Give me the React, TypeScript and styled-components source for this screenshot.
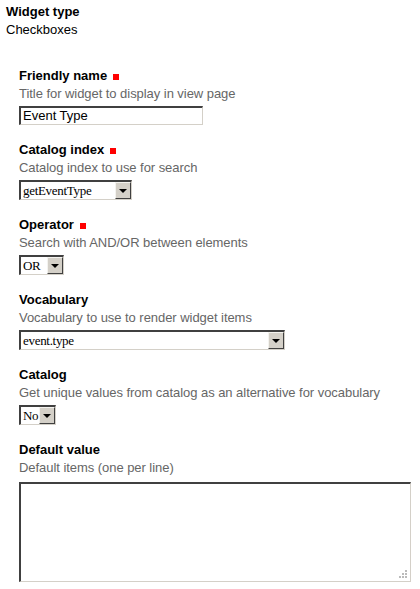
import React from "react";
import styled, { createGlobalStyle } from "styled-components";

const Global = createGlobalStyle`
  html, body { margin: 0; padding: 0; background: #fff; }
  body { font-family: "Liberation Sans", Arial, sans-serif; font-size: 13px; color: #000; }
`;

const Page = styled.div`
  padding: 3px 6px 0 6px;
  display: flex;
  flex-direction: column;
`;

const Header = styled.div`
  display: flex;
  flex-direction: column;
  line-height: 18px;
`;

const HeaderTitle = styled.div`
  font-weight: bold;
`;

const Fields = styled.div`
  margin-top: 28px;
  margin-left: 13px;
  display: flex;
  flex-direction: column;
  gap: 16px;
`;

const Field = styled.div`
  display: flex;
  flex-direction: column;
  align-items: flex-start;
`;

const Label = styled.div`
  font-weight: bold;
  line-height: 18px;
  display: flex;
  align-items: center;
`;

const Required = styled.span`
  display: inline-block;
  width: 6px;
  height: 6px;
  background: #ff0000;
  margin-left: 6px;
  margin-top: 2px;
`;

const Help = styled.div`
  color: #666;
  line-height: 18px;
  margin-bottom: 3px;
  letter-spacing: -0.05px;
`;

const TextInput = styled.div`
  box-sizing: border-box;
  width: 184px;
  height: 19px;
  border-style: solid;
  border-width: 2px 1px 1px 2px;
  border-color: #404040 #d4d0c8 #d4d0c8 #404040;
  padding: 0 2px;
  line-height: 15px;
  font-size: 13px;
  background: #fff;
`;

const SelectBox = styled.div<{ $w: number }>`
  box-sizing: border-box;
  width: ${(p) => p.$w}px;
  height: 20px;
  border-style: solid;
  border-width: 2px 1px 1px 2px;
  border-color: #404040 #d4d0c8 #d4d0c8 #404040;
  display: flex;
  background: #fff;
`;

const SelectValue = styled.div`
  flex: 1;
  overflow: hidden;
  white-space: nowrap;
  font-family: "Liberation Serif", "Times New Roman", serif;
  font-size: 13px;
  line-height: 17px;
  padding-left: 2px;
  letter-spacing: -0.3px;
`;

const SelectButton = styled.div`
  box-sizing: border-box;
  width: 16px;
  flex: none;
  height: 17px;
  background: #d4d0c8;
  border-style: solid;
  border-width: 1px;
  border-color: #f4f3ef #404040 #404040 #f4f3ef;
  display: flex;
  align-items: center;
  justify-content: center;
`;

const Arrow = styled.span`
  width: 0;
  height: 0;
  border-left: 4px solid transparent;
  border-right: 4px solid transparent;
  border-top: 4px solid #000;
  margin-top: 1px;
`;

const TextArea = styled.div`
  position: relative;
  box-sizing: border-box;
  width: 392px;
  height: 100px;
  margin-top: 2px;
  border-style: solid;
  border-width: 2px 1px 1px 2px;
  border-color: #404040 #d4d0c8 #d4d0c8 #404040;
  background: #fff;
`;

const Grip = styled.svg`
  position: absolute;
  right: 2px;
  bottom: 2px;
`;

const Select = ({ w, value }: { w: number; value: string }) => (
  <SelectBox $w={w}>
    <SelectValue>{value}</SelectValue>
    <SelectButton>
      <Arrow />
    </SelectButton>
  </SelectBox>
);

export default function App() {
  return (
    <>
      <Global />
      <Page>
        <Header>
          <HeaderTitle>Widget type</HeaderTitle>
          <div>Checkboxes</div>
        </Header>
        <Fields>
          <Field>
            <Label>
              Friendly name<Required />
            </Label>
            <Help>Title for widget to display in view page</Help>
            <TextInput>Event Type</TextInput>
          </Field>
          <Field>
            <Label>
              Catalog index<Required />
            </Label>
            <Help>Catalog index to use for search</Help>
            <Select w={113} value="getEventType" />
          </Field>
          <Field>
            <Label>
              Operator<Required />
            </Label>
            <Help>Search with AND/OR between elements</Help>
            <Select w={45} value="OR" />
          </Field>
          <Field>
            <Label>Vocabulary</Label>
            <Help>Vocabulary to use to render widget items</Help>
            <Select w={266} value="event.type" />
          </Field>
          <Field>
            <Label>Catalog</Label>
            <Help>Get unique values from catalog as an alternative for vocabulary</Help>
            <Select w={37} value="No" />
          </Field>
          <Field>
            <Label>Default value</Label>
            <Help>Default items (one per line)</Help>
            <TextArea>
              <Grip width="10" height="10" viewBox="0 0 10 10">
                <rect x="7" y="1" width="2" height="2" fill="#bbb" />
                <rect x="4" y="4" width="2" height="2" fill="#bbb" />
                <rect x="7" y="4" width="2" height="2" fill="#bbb" />
                <rect x="1" y="7" width="2" height="2" fill="#bbb" />
                <rect x="4" y="7" width="2" height="2" fill="#bbb" />
                <rect x="7" y="7" width="2" height="2" fill="#bbb" />
              </Grip>
            </TextArea>
          </Field>
        </Fields>
      </Page>
    </>
  );
}
